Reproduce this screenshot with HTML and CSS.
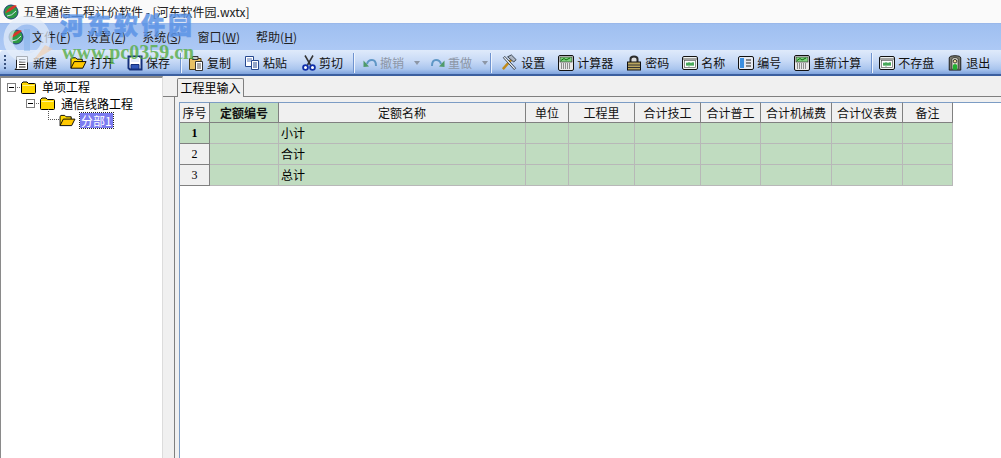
FILE: index.html
```html
<!DOCTYPE html>
<html lang="zh">
<head>
<meta charset="utf-8">
<title>五星通信工程计价软件</title>
<link rel="stylesheet" href="styles.css">
</head>
<body>
<svg class="sprite" width="0" height="0" aria-hidden="true">
  <defs>
    <symbol id="i-folder" viewBox="0 0 15 13"><path d="M.5 2.5 L2 1 H6 L7.5 2.5 H13.5 Q14.5 2.5 14.5 3.5 V11.5 Q14.5 12.5 13.5 12.5 H1.5 Q.5 12.5 .5 11.5 Z" fill="#ffd800" stroke="#000" stroke-width="1"/><path d="M1.5 4.5 H13.5" stroke="#fff48a"/></symbol>
    <symbol id="i-open" viewBox="0 0 18 14"><path d="M1 12.5 V2.5 L2 1.5 H6 L7.5 3 H13 V5.5" fill="#ffd800" stroke="#000"/><path d="M1 12.5 L4.5 5.5 H17 L13.5 12.5 Z" fill="#ffc800" stroke="#000"/></symbol>
    <symbol id="i-new" viewBox="0 0 16 16"><path d="M2.5 1.5 H13.5 V14.5 H1 L2.5 13 Z" fill="#fff" stroke="#1c1c1c"/><path d="M5 4.5 H11.5 M5 7 H11.5 M5 9.5 H11.5 M5 12 H11.5" stroke="#222"/></symbol>
    <symbol id="i-save" viewBox="0 0 16 16"><path d="M1.5 1.5 H14.5 V14.5 H3 L1.5 13 Z" fill="#fff" stroke="#14307c" stroke-width="2"/><path d="M4 9.5 H12 V14 H4 Z" fill="#3056b8" stroke="#14307c"/><path d="M4 2 H12 V7 H4 Z" fill="#e8eefb"/></symbol>
    <symbol id="i-copy" viewBox="0 0 16 16"><path d="M1.5 3.5 H13 V14.5 H1.5 Z" fill="#e8c164" stroke="#4b3a12"/><path d="M4.5 1.5 H10 V4.5 H4.5 Z" fill="#c9c9c9" stroke="#333"/><path d="M7.5 6.5 H14.5 V15.5 H7.5 Z" fill="#fff" stroke="#333"/><path d="M9 9 H13 M9 11 H13 M9 13 H13" stroke="#555"/></symbol>
    <symbol id="i-paste" viewBox="0 0 16 16"><path d="M1.5 1.5 H9.5 V11.5 H1.5 Z" fill="#fff" stroke="#27488f"/><path d="M3 4 H8 M3 6 H8" stroke="#5b78b8"/><path d="M7.5 5.5 H14.5 V14.5 H7.5 Z" fill="#fff" stroke="#27488f"/><path d="M9 8 H13 M9 10 H13 M9 12 H13" stroke="#27488f"/></symbol>
    <symbol id="i-cut" viewBox="0 0 14 16"><path d="M3 0.5 L8.5 10 M11 0.5 L5.5 10" stroke="#333" stroke-width="1.5"/><circle cx="3.5" cy="12.5" r="2.4" fill="#fff" stroke="#0f2ea8" stroke-width="1.8"/><circle cx="10.5" cy="12.5" r="2.4" fill="#fff" stroke="#0f2ea8" stroke-width="1.8"/></symbol>
    <symbol id="i-undo" viewBox="0 0 14 12"><path d="M4 7 Q5 3 9 3 Q13 3 13 9" fill="none" stroke="#5f97c6" stroke-width="2"/><path d="M.5 3.5 L6 9.5 L.5 10 Z" fill="#4f9a6a"/></symbol>
    <symbol id="i-redo" viewBox="0 0 14 12"><path d="M10 7 Q9 3 5 3 Q1 3 1 9" fill="none" stroke="#5f97c6" stroke-width="2"/><path d="M13.5 3.5 L8 9.5 L13.5 10 Z" fill="#4f9a6a"/></symbol>
    <symbol id="i-tools" viewBox="0 0 18 18"><path d="M2 16 L11 6" stroke="#c08a1c" stroke-width="2.6"/><path d="M7 3 L11 1 L16 6 L13.5 8.5 Z" fill="#aeb6c2" stroke="#34404e"/><path d="M4 2.5 L15.5 15 L14 16.5 L2.5 4 Z" fill="#e6ebf2" stroke="#34404e"/></symbol>
    <symbol id="i-calc" viewBox="0 0 16 16"><rect x=".5" y=".5" width="15" height="15" rx="1.5" fill="#e8e8e8" stroke="#111"/><rect x="2" y="2" width="12" height="5" fill="#7fd27f" stroke="#222" stroke-width=".6"/><path d="M3 5.5 L6 3.5 L8 5 L12 3" fill="none" stroke="#0b6d0b"/><path d="M3 9 H13 M3 11 H13 M3 13 H13" stroke="#333" stroke-dasharray="1 1"/></symbol>
    <symbol id="i-lock" viewBox="0 0 14 16"><path d="M3.5 7 V4 Q3.5 1.5 7 1.5 Q10.5 1.5 10.5 4 V7" fill="#ddd" stroke="#2c2c2c" stroke-width="2"/><rect x=".5" y="7" width="13" height="8" fill="#b9a45e" stroke="#111"/><path d="M1 10 H13 M1 12.5 H13" stroke="#333"/></symbol>
    <symbol id="i-win" viewBox="0 0 16 16"><rect x=".5" y="1.5" width="15" height="13" rx="1.5" fill="#eef1ee" stroke="#111"/><path d="M1 4 H15" stroke="#555"/><rect x="2.5" y="5.5" width="11" height="7" fill="#fff" stroke="#444" stroke-width=".6"/><path d="M4 9 H12 M5 7.5 V11 M7 7 V11.5 M9 7.5 V11 M11 7 V11" stroke="#0a8a22"/></symbol>
    <symbol id="i-num" viewBox="0 0 16 16"><rect x=".5" y="1.5" width="15" height="13" rx="1.5" fill="#e6eaf2" stroke="#111"/><rect x="2" y="3" width="4" height="10" fill="#3c8fe0"/><path d="M8 5 H13 M8 8 H13 M8 11 H13" stroke="#222"/></symbol>
    <symbol id="i-exit" viewBox="0 0 16 18"><path d="M1.5 17 V3.5 Q1.5 .8 8 .8 Q14.5 .8 14.5 3.5 V17 Z" fill="#77776a" stroke="#111"/><path d="M4.5 16 V4.5 Q4.5 3 8 3 Q11.5 3 11.5 4.5 V16 Z" fill="#e8e8d8" stroke="#333"/><circle cx="8" cy="7" r="2" fill="#f2e2a0" stroke="#222"/><path d="M5.5 16.5 V12 Q5.5 10 8 10 Q10.5 10 10.5 12 V16.5 Z" fill="#21b030"/></symbol>
    <symbol id="i-app" viewBox="0 0 16 16"><circle cx="8" cy="8" r="7" fill="#2d9a45" stroke="#1f3f78"/><path d="M2 9 Q7 8 14 2 L12 1 Q6 3 2 9Z" fill="#d9362a"/><path d="M4 12 Q9 12 13 7" stroke="#d8e0f0" fill="none"/></symbol>
  </defs>
</svg>

<div class="app">
  <header class="titlebar">
    <svg class="app-icon"><use href="#i-app"/></svg>
    <span>五星通信工程计价软件 - [河东软件园.wxtx]</span>
  </header>

  <nav class="menubar">
    <svg class="app-icon doc-icon"><use href="#i-app"/></svg>
    <span class="menu-item">文件(<u>F</u>)</span>
    <span class="menu-item">设置(<u>Z</u>)</span>
    <span class="menu-item">系统(<u>S</u>)</span>
    <span class="menu-item">窗口(<u>W</u>)</span>
    <span class="menu-item">帮助(<u>H</u>)</span>
  </nav>

  <div class="toolbar">
    <span class="grip"></span>
    <span class="tool"><svg class="ic"><use href="#i-new"/></svg>新建</span>
    <span class="tool"><svg class="ic ic-w"><use href="#i-open"/></svg>打开</span>
    <span class="tool"><svg class="ic"><use href="#i-save"/></svg>保存</span>
    <span class="sep"></span>
    <span class="tool"><svg class="ic"><use href="#i-copy"/></svg>复制</span>
    <span class="tool"><svg class="ic"><use href="#i-paste"/></svg>粘贴</span>
    <span class="tool tool-cut"><svg class="ic ic-n"><use href="#i-cut"/></svg>剪切</span>
    <span class="sep sep-wide"></span>
    <span class="tool off"><svg class="ic ic-n"><use href="#i-undo"/></svg>撤销</span>
    <span class="drop"></span>
    <span class="tool off tool-redo"><svg class="ic ic-n"><use href="#i-redo"/></svg>重做</span>
    <span class="drop"></span>
    <span class="sep sep-tight"></span>
    <span class="tool"><svg class="ic ic-t"><use href="#i-tools"/></svg>设置</span>
    <span class="tool"><svg class="ic"><use href="#i-calc"/></svg>计算器</span>
    <span class="tool tool-lock"><svg class="ic ic-n"><use href="#i-lock"/></svg>密码</span>
    <span class="tool"><svg class="ic"><use href="#i-win"/></svg>名称</span>
    <span class="tool"><svg class="ic"><use href="#i-num"/></svg>编号</span>
    <span class="tool"><svg class="ic"><use href="#i-calc"/></svg>重新计算</span>
    <span class="sep"></span>
    <span class="tool"><svg class="ic"><use href="#i-win"/></svg>不存盘</span>
    <span class="tool"><svg class="ic"><use href="#i-exit"/></svg>退出</span>
  </div>

  <main class="workspace">
    <aside class="tree">
      <div class="node lvl0"><span class="box"></span><svg class="fold"><use href="#i-folder"/></svg><span>单项工程</span></div>
      <div class="node lvl1"><span class="box"></span><svg class="fold"><use href="#i-folder"/></svg><span>通信线路工程</span></div>
      <div class="node lvl2"><span class="dots"></span><svg class="fold-open"><use href="#i-open"/></svg><span class="picked">分部1</span></div>
    </aside>

    <section class="pane">
      <div class="tabs"><span class="tab">工程里输入</span></div>
      <div class="sheet">
        <table class="grid">
          <colgroup>
            <col class="c1"><col class="c2"><col class="c3"><col class="c4"><col class="c5"><col class="c6"><col class="c7"><col class="c8"><col class="c9"><col class="c10">
          </colgroup>
          <thead>
            <tr><th>序号</th><th class="active">定额编号</th><th>定额名称</th><th>单位</th><th>工程里</th><th>合计技工</th><th>合计普工</th><th>合计机械费</th><th>合计仪表费</th><th>备注</th></tr>
          </thead>
          <tbody>
            <tr><th class="active">1</th><td></td><td class="name">小计</td><td></td><td></td><td></td><td></td><td></td><td></td><td></td></tr>
            <tr><th>2</th><td></td><td class="name">合计</td><td></td><td></td><td></td><td></td><td></td><td></td><td></td></tr>
            <tr><th>3</th><td></td><td class="name">总计</td><td></td><td></td><td></td><td></td><td></td><td></td><td></td></tr>
          </tbody>
        </table>
      </div>
    </section>
  </main>

  <div class="watermark">
    <svg class="wm-logo" viewBox="0 0 52 52"><circle cx="24" cy="24" r="19" fill="none" stroke="#e6eefa" stroke-width="9" opacity=".7"/><path d="M24 14 V36" stroke="#7fb0e8" stroke-width="6" opacity=".45"/><path d="M30 46 L42 30 L50 34 Z" fill="#f2c9a0" opacity=".55"/></svg>
    <span class="wm-cn">河东软件园</span>
    <span class="wm-en">www.pc0359.cn</span>
  </div>
</div>
</body>
</html>
```

FILE: styles.css
```css
* { box-sizing: border-box; }
html, body { margin: 0; height: 100%; }
body {
  font-family: "Noto Sans CJK SC", "Liberation Sans", sans-serif;
  font-size: 12px;
  color: #000;
  background: #fff;
  overflow: hidden;
}
.sprite { position: absolute; }
.app { position: relative; width: 1001px; height: 458px; display: flex; flex-direction: column; overflow: hidden; }

.titlebar {
  height: 23px; flex: none; display: flex; align-items: center; gap: 4px;
  padding: 0 0 0 3px; background: #fafafa; color: #222; line-height: 1;
}
.app-icon { width: 16px; height: 16px; flex: none; }

.menubar {
  height: 27px; flex: none; display: flex; align-items: center; gap: 16px;
  padding: 0 0 0 8px; background: linear-gradient(#9fbff0, #adc9f5);
  color: #222; line-height: 1; border-top: 1px solid #9ab8ea;
}
.doc-icon { margin-right: -8px; }
.menu-item { white-space: nowrap; }
.menu-item u { text-decoration: underline; }

.toolbar {
  height: 26px; flex: none; display: flex; align-items: center; gap: 13px;
  padding: 1px 0 0 4px; color: #111; line-height: 1; white-space: nowrap;
  background: linear-gradient(#dfeafb 0%, #c8daf6 45%, #a9c5ee 80%, #7ea2dc 100%);
  border-bottom: 2px solid #3b5f9f;
  border-radius: 4px 0 0 0;
}
.grip { width: 2px; height: 16px; margin-right: -5px; flex: none; background: repeating-linear-gradient(#39527f 0 2px, transparent 2px 4px); }
.tool { display: flex; align-items: center; gap: 3px; flex: none; }
.tool-cut { margin-left: 2px; }
.tool-redo { margin-left: 1px; }
.tool-lock { margin-left: 1px; gap: 4px; }
.off { color: #8c96a6; }
.ic { width: 16px; height: 16px; flex: none; }
.ic-w { width: 17px; }
.ic-n { width: 14px; }
.ic-t { width: 17px; height: 17px; }
.sep { width: 1px; height: 20px; flex: none; background: #6f93cf; box-shadow: 1px 0 #eef4fd; margin: 0 -6px 0 -3px; }
.sep-wide { margin: 0 -4px 0 -3px; }
.sep-tight { margin: 0 -3px 0 -8px; }
.drop { width: 0; height: 0; flex: none; border: 3px solid transparent; border-top: 4px solid #8c96a6; border-bottom: 0; margin: 1px -3px 0 -3px; }

.workspace { flex: 1; min-height: 0; display: flex; background: #f0f0f0; }

.tree {
  width: 163px; flex: none; background: #fff; padding-top: 1px;
  border-top: 2px solid #8a8a8a; border-left: 1px solid #8a8a8a; border-right: 1px solid #dcdcdc;
}
.node { height: 16.5px; display: flex; align-items: center; position: relative; white-space: nowrap; line-height: 1; }
.lvl0 { padding-left: 6px; gap: 5px; }
.lvl1 { padding-left: 25px; gap: 5px; }
.lvl1 .fold { margin-right: 1px; }
.lvl0 .fold { margin-right: 1px; }
.lvl2 { padding-left: 58px; gap: 3px; }
.box {
  width: 9px; height: 9px; flex: none; border: 1px solid #7f7f7f; background: #fff; position: relative;
}
.box::before { content: ""; position: absolute; left: 1px; right: 1px; top: 3px; height: 1px; background: #000; }
.box::after { content: ""; position: absolute; left: 100%; top: 3px; width: 5px; border-top: 1px dotted #666; }
.fold { width: 15px; height: 13px; flex: none; }
.fold-open { width: 17px; height: 13px; flex: none; }
.dots { position: absolute; left: 47px; top: -3px; width: 11px; height: 11px; border-left: 1px dotted #555; border-bottom: 1px dotted #555; }
.picked { background: #7c7cf0; color: #fff; outline: 1px dotted #222; padding: 1px 1px; line-height: 13px; margin-left: 1px; }

.pane { flex: 1; min-width: 0; display: flex; flex-direction: column; padding-top: 2px; }
.tabs { height: 19px; flex: none; padding-left: 14px; border-bottom: 1px solid #7f7f7f; display: flex; }
.tab {
  width: 67px; height: 19px; line-height: 18px; text-align: center;
  border: 1px solid #7f7f7f; border-bottom: 0; background: #f0f0f0; border-radius: 2px 2px 0 0;
}
.sheet {
  flex: 1; min-height: 0; margin-left: 11px; padding: 5px 0 0 5px; position: relative;
  border-left: 1px solid #7f7f7f; background: #f0f0f0;
}
.sheet::before { content: ""; position: absolute; left: 4px; right: 0; top: 5px; bottom: 0; background: #fff; border-left: 1px solid #7c9cc4; border-top: 1px solid #7c9cc4; }
.grid {
  border-collapse: separate; border-spacing: 0; table-layout: fixed; width: 773px; position: relative;
}
.c1 { width: 30px; } .c2 { width: 69px; } .c3 { width: 247px; } .c4 { width: 43px; }
.c5 { width: 66px; } .c6 { width: 66px; } .c7 { width: 60px; } .c8 { width: 71px; } .c9 { width: 71px; } .c10 { width: 50px; }
.grid th, .grid td { padding: 0; font-weight: 400; line-height: 1; overflow: hidden; white-space: nowrap; }
.grid thead th {
  height: 21px; text-align: center; background: #f0f0f0; color: #111;
  border-right: 1px solid #808080; border-bottom: 1px solid #808080;
  border-top: 1px solid #7c9cc4;
}
.grid thead th.active { background: #c0dcc0; font-weight: 700; }
.grid tbody th {
  height: 21px; text-align: center; background: #f0f0f0; border-right: 1px solid #808080; border-bottom: 1px solid #808080;
  font-family: "Liberation Serif", serif; font-size: 12px;
}
.grid tbody th.active { background: #c0dcc0; font-weight: 700; }
.grid td { height: 21px; background: #c0dcc0; border-right: 1px solid #b8b8b8; border-bottom: 1px solid #b8b8b8; }
.grid td.name { padding-left: 2px; }

.watermark { position: absolute; inset: 0; pointer-events: none; }
.wm-logo { position: absolute; left: 3px; top: 15px; width: 52px; height: 52px; }
.wm-cn {
  position: absolute; left: 60px; top: 11px; font-weight: 900;
  font-size: 24px; line-height: 26px; letter-spacing: 3px; color: #5b93e6; opacity: .85; white-space: nowrap;
  -webkit-text-stroke: .5px #5b93e6;
}
.wm-en {
  position: absolute; left: 62px; top: 40px; font-family: "Liberation Serif", serif; font-weight: 700;
  font-size: 20px; line-height: 24px; color: #58ad44; opacity: .8; white-space: nowrap;
}
```
